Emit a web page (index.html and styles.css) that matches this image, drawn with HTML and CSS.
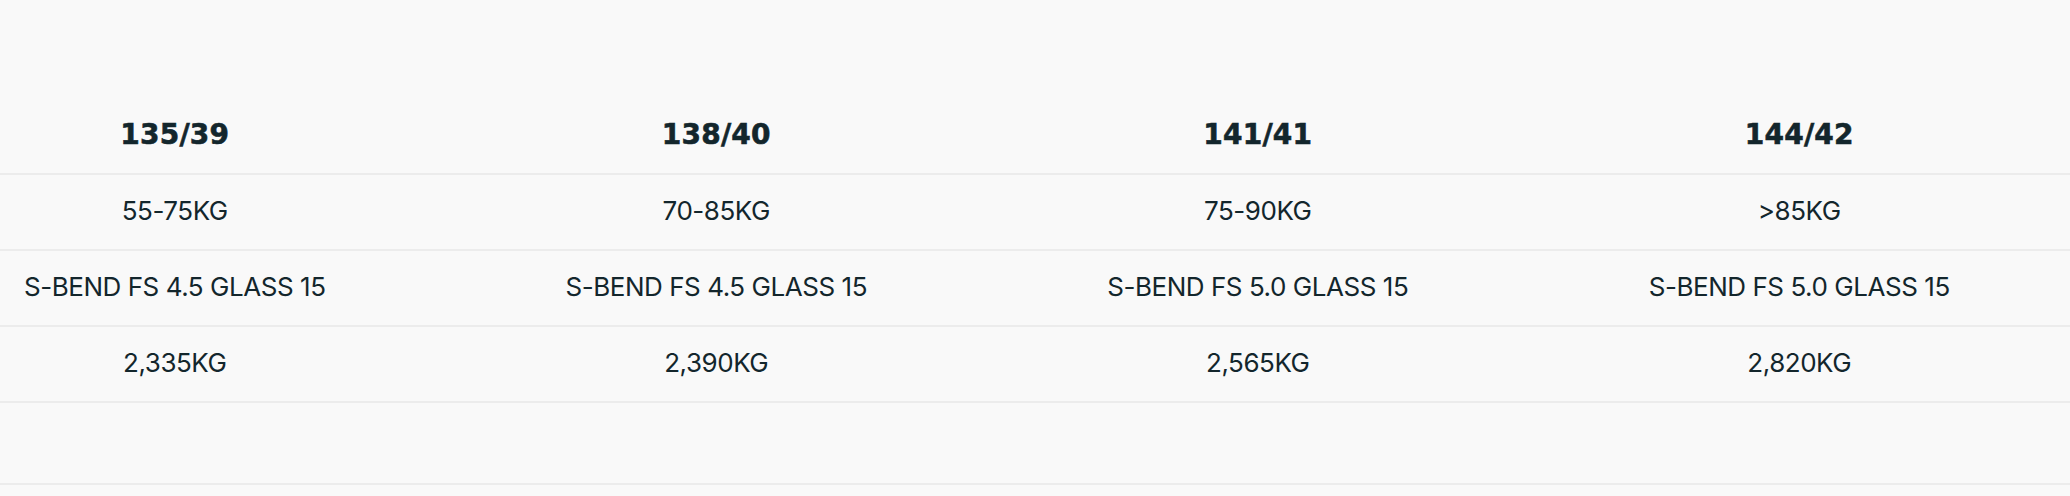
FILE: index.html
```html
<!DOCTYPE html>
<html lang="en">
<head>
<meta charset="utf-8">
<title>Sizes</title>
<link rel="stylesheet" href="styles.css">
</head>
<body>
<div class="page">
  <div class="table-wrap">
    <table class="spec">
      <thead>
        <tr>
          <th>135/39</th>
          <th>138/40</th>
          <th>141/41</th>
          <th>144/42</th>
        </tr>
      </thead>
      <tbody>
        <tr>
          <td>55-75KG</td>
          <td>70-85KG</td>
          <td>75-90KG</td>
          <td>&gt;85KG</td>
        </tr>
        <tr>
          <td>S-BEND FS 4.5 GLASS 15</td>
          <td>S-BEND FS 4.5 GLASS 15</td>
          <td>S-BEND FS 5.0 GLASS 15</td>
          <td>S-BEND FS 5.0 GLASS 15</td>
        </tr>
        <tr>
          <td>2,335KG</td>
          <td>2,390KG</td>
          <td>2,565KG</td>
          <td>2,820KG</td>
        </tr>
        <tr class="empty">
          <td></td>
          <td></td>
          <td></td>
          <td></td>
        </tr>
      </tbody>
    </table>
  </div>
</div>
</body>
</html>
```

FILE: styles.css
```css
html, body {
  margin: 0;
  padding: 0;
  background: #f9f9f9;
}

.page {
  padding-top: 97px;
  height: 399px;
  overflow: hidden;
}

.table-wrap {
  overflow: hidden;
  width: 2070px;
}

.spec {
  border-collapse: collapse;
  table-layout: fixed;
  width: 2166px;
  margin-left: -96px;
  color: #13262c;
}

.spec th,
.spec td {
  width: 25%;
  text-align: center;
  padding: 0;
  border-bottom: 2px solid #ececec;
}

.spec th {
  height: 74px;
  font-family: "DejaVu Sans", sans-serif;
  font-weight: 700;
  font-size: 28px;
  letter-spacing: 0.2px;
  -webkit-text-stroke: 0.6px #13262c;
  vertical-align: middle;
  padding-bottom: 2px;
}

.spec td {
  height: 70px;
  font-family: Inter, "Liberation Sans", sans-serif;
  font-size: 26px;
  font-weight: 400;
  letter-spacing: -0.45px;
  padding-bottom: 4px;
}

.spec tr.empty td {
  height: 76px;
}
```
